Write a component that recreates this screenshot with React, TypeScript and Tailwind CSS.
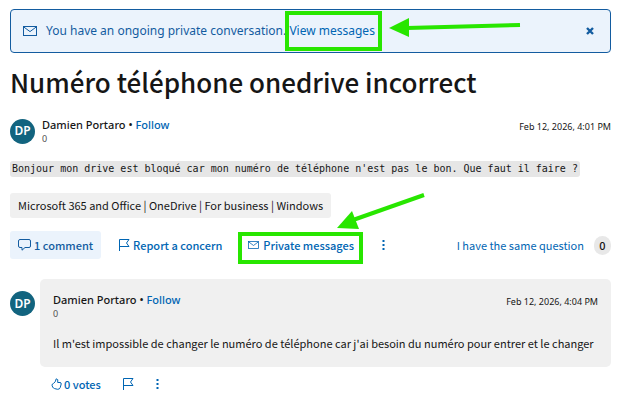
import React from 'react'

const tags = ['Microsoft 365 and Office', 'OneDrive', 'For business', 'Windows']

const MailIcon = ({ className }: { className?: string }) => (
    <svg viewBox="0 0 14 10" fill="none" stroke="currentColor" className={className} aria-hidden="true">
        <rect x="0.5" y="0.5" width="13" height="9" />
        <path d="M0.8 1 L7 5.6 L13.2 1" />
    </svg>
)

const FlagIcon = () => (
    <svg viewBox="0 0 11 12" fill="none" stroke="currentColor" className="w-[11px] h-3" aria-hidden="true">
        <path d="M0.5 12 V0.5 H10 L7.5 4 L10 7.5 H1" />
    </svg>
)

const CommentIcon = () => (
    <svg viewBox="0 0 13 12" fill="none" stroke="currentColor" className="w-[13px] h-3" aria-hidden="true">
        <path d="M2 0.5 H11 Q12.5 0.5 12.5 2 V7 Q12.5 8.5 11 8.5 H7 L4 11.2 V8.5 H2 Q0.5 8.5 0.5 7 V2 Q0.5 0.5 2 0.5 Z" />
    </svg>
)

const ThumbIcon = () => (
    <svg viewBox="0 0 11 12" fill="none" stroke="currentColor" strokeLinejoin="round" className="w-[11px] h-3" aria-hidden="true">
        <path d="M1 7.2 Q1 5.8 2.5 5.4 Q4.6 4.4 5.2 0.8 Q7.6 0.8 6.7 4.5 H9 Q10.4 4.6 10.2 6 L9.3 9.4 Q8.7 11.4 6.6 11.3 L3.6 10.6 Q2.8 9.9 1.8 9.5 Z" />
    </svg>
)

const MoreIcon = () => (
    <svg viewBox="0 0 3 10" fill="currentColor" className="w-[3px] h-[10px]" aria-hidden="true">
        <rect x="0.5" y="0" width="2" height="2" />
        <rect x="0.5" y="4" width="2" height="2" />
        <rect x="0.5" y="8" width="2" height="2" />
    </svg>
)

const Avatar = () => (
    <div className="flex size-[25px] shrink-0 items-center justify-center rounded-full bg-[#12647f] text-[12px] font-semibold text-white">
        DP
    </div>
)

const Author = ({ date }: { date: string }) => (
    <div className="flex flex-1 justify-between">
        <div>
            <div className="text-[11px] leading-4 font-medium">
                Damien Portaro <span>•</span>{' '}
                <a href="#follow" className="text-[#0065b3]">Follow</a>
            </div>
            <div className="text-[9px] leading-3 text-[#505050]">0</div>
        </div>
        <time className="text-[9px] leading-5">{date}</time>
    </div>
)

const Highlight = ({ className }: { className: string }) => (
    <span className={`pointer-events-none absolute border-4 border-[#28e600] ${className}`} />
)

const App = () => {
    return (
        <main className="bg-white pt-[9px] pr-[11px] pb-4 pl-[10px] font-['Noto_Sans','Open_Sans',sans-serif] text-[#161616]">
            <div className="flex h-11 items-center rounded-[4px] border border-[#135ca0] bg-[#ebf3fc] pr-4 pl-3 text-[12px] leading-5 text-[#135ca0]">
                <MailIcon className="mr-[9px] w-[14px] h-[10px]" />
                <p className="flex-1">
                    You have an ongoing private conversation.{' '}
                    <span className="relative inline-block">
                        <a href="#messages" className="text-[#0065b3]">View messages</a>
                        <Highlight className="-right-[7px] -left-1 -inset-y-[10px]" />
                        <svg viewBox="0 0 132 22" className="pointer-events-none absolute -top-1 left-full ml-[14px] w-[132px] h-[22px] max-w-none" aria-hidden="true">
                            <path d="M18 11 L131 8" stroke="#28e600" strokeWidth="4" />
                            <path d="M0 11 L20 1 V20 Z" fill="#28e600" />
                        </svg>
                    </span>
                </p>
                <button type="button" aria-label="Dismiss">
                    <svg viewBox="0 0 8 8" className="size-2" stroke="currentColor" strokeWidth="2.4" aria-hidden="true">
                        <path d="M1 1 L7 7 M7 1 L1 7" />
                    </svg>
                </button>
            </div>

            <h1 className="mt-[11px] font-['Noto_Sans_CJK_SC',sans-serif] text-[26px] leading-9 font-medium">Numéro téléphone onedrive incorrect</h1>

            <div className="mt-[17px] flex items-center gap-[7px]">
                <Avatar />
                <Author date="Feb 12, 2026, 4:01 PM" />
            </div>

            <p className="mt-4 flex">
                <code className="rounded-[3px] bg-[#e6e6e6] px-[2px] font-['DejaVu_Sans_Mono',monospace] text-[10px] leading-4">
                    Bonjour mon drive est bloqué car mon numéro de téléphone n'est pas le bon. Que faut il faire ?
                </code>
            </p>

            <div className="mt-4 flex">
                <div className="rounded-[3px] bg-[#f0f0f0] px-2 font-['Noto_Sans_CJK_SC',sans-serif] text-[11px] leading-[25px]">{tags.join(' | ')}</div>
            </div>

            <div className="mt-[13px] flex items-center font-['Noto_Sans_CJK_SC',sans-serif] text-[11px] leading-4 font-medium text-[#0065b3]">
                <button type="button" className="flex h-7 items-center gap-[3px] rounded-[3px] bg-[#ebf3fc] px-2 text-[#135ca0]">
                    <CommentIcon />
                    1 comment
                </button>
                <button type="button" className="ml-[18px] flex items-center gap-[3px]">
                    <FlagIcon />
                    Report a concern
                </button>
                <div className="relative ml-[26px]">
                    <button type="button" className="flex items-center gap-1">
                        <MailIcon className="w-[11px] h-2" />
                        Private messages
                    </button>
                    <Highlight className="-top-[5px] -bottom-[11px] -left-[10px] -right-[9px]" />
                    <svg viewBox="0 0 90 36" className="pointer-events-none absolute bottom-full left-[89px] mb-2 h-9 w-[90px] max-w-none" aria-hidden="true">
                        <path d="M16 27 L87 2" stroke="#28e600" strokeWidth="4" />
                        <path d="M0 35 L15 18 L22 36 Z" fill="#28e600" />
                    </svg>
                </div>
                <button type="button" aria-label="More actions" className="ml-7">
                    <MoreIcon />
                </button>
                <div className="ml-auto flex items-center gap-[10px]">
                    <button type="button" className="font-normal">I have the same question</button>
                    <span className="flex h-[19px] w-[17px] items-center justify-center rounded-full bg-[#e8e8e8] text-[#161616]">0</span>
                </div>
            </div>

            <div className="mt-5 flex gap-[5px]">
                <div className="pt-3">
                    <Avatar />
                </div>
                <div className="flex-1">
                    <article className="rounded-[5px] bg-[#f0f0f0] px-[13px] pt-[13px] pb-4">
                        <div className="flex">
                            <Author date="Feb 12, 2026, 4:04 PM" />
                        </div>
                        <p className="mt-[15px] font-['Noto_Sans_CJK_SC',sans-serif] text-[11px] leading-4">
                            Il m'est impossible de changer le numéro de téléphone car j'ai besoin du numéro pour entrer et le changer
                        </p>
                    </article>
                    <div className="mt-[9px] flex items-center gap-[22px] pl-[11px] font-['Noto_Sans_CJK_SC',sans-serif] text-[11px] leading-4 font-medium text-[#0065b3]">
                        <button type="button" className="flex items-center gap-[2px]">
                            <ThumbIcon />
                            0 votes
                        </button>
                        <button type="button" aria-label="Report a concern">
                            <FlagIcon />
                        </button>
                        <button type="button" aria-label="More actions">
                            <MoreIcon />
                        </button>
                    </div>
                </div>
            </div>
        </main>
    )
}

export default App
